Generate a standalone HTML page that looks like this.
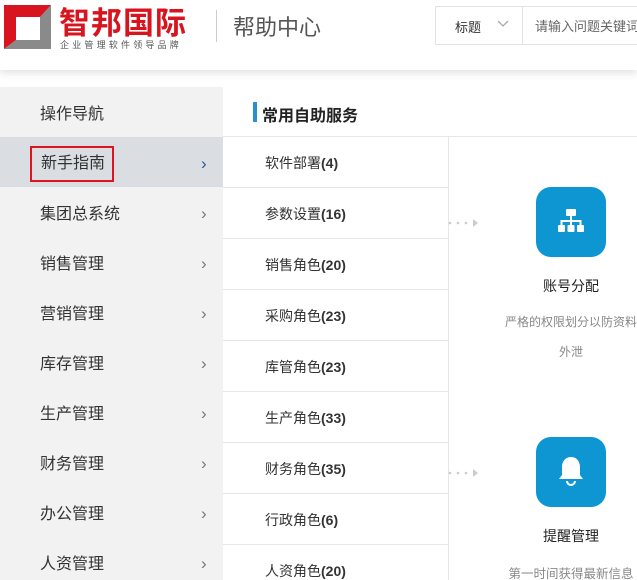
<!DOCTYPE html>
<html><head><meta charset="utf-8"><style>
*{margin:0;padding:0;box-sizing:border-box}
html,body{width:637px;height:580px;overflow:hidden}
body{background:#fff;font-family:"Liberation Sans","Noto Sans CJK SC",sans-serif;position:relative}
.a{position:absolute}
.hdr{left:0;top:0;width:637px;height:70px;background:#fff;box-shadow:0 3px 8px rgba(0,0,0,.12);z-index:2}
.nav{left:0;top:87px;width:223px;height:493px;background:#f2f2f2}
.ni{position:absolute;left:0;width:223px;height:50px;line-height:50px;padding-top:3px;padding-left:40px;font-size:16px;color:#333}
.ni .c{position:absolute;left:201px;top:2px;font-size:17px;color:#777}
.mi{position:absolute;left:223px;width:225px;height:51px;border-bottom:1px solid #e6e6e6;padding-left:42px;padding-top:1px;line-height:51px;font-size:14px;color:#333}
.mi b{font-weight:bold}
.ic{width:70px;height:70px;border-radius:15px;background:#0e96d3}
.t{font-size:14px;color:#222;text-align:center;width:200px}
.d{font-size:12px;color:#888;text-align:center;width:200px}
</style></head><body>
<div class="a hdr">
 <svg class="a" style="left:4px;top:5px" width="47" height="44" viewBox="0 0 47 44">
  <path d="M47 0V44H0L12 35H36V12Z" fill="#8a8a8a"/>
  <path d="M0 0H47L36 12H12V35L0 44Z" fill="#d8141e"/>
 </svg>
 <div class="a" style="left:59px;top:-2px;font-size:31px;font-weight:bold;color:#d8141e;letter-spacing:1px">智邦国际</div>
 <div class="a" style="left:60px;top:38px;font-size:9px;color:#555;letter-spacing:3.2px">企业管理软件领导品牌</div>
 <div class="a" style="left:216px;top:10px;width:1px;height:32px;background:#ccc"></div>
 <div class="a" style="left:233px;top:10px;font-size:22px;color:#555">帮助中心</div>
 <div class="a" style="left:435px;top:6px;width:210px;height:39px;border:1px solid #e3e3e3"></div>
 <div class="a" style="left:455px;top:17px;font-size:13px;color:#333">标题</div>
 <svg class="a" style="left:496px;top:19px" width="14" height="10"><path d="M2 2L7 7L12 2" stroke="#aaa" fill="none" stroke-width="1.3"/></svg>
 <div class="a" style="left:522px;top:7px;width:1px;height:37px;background:#e3e3e3"></div>
 <div class="a" style="left:535px;top:16px;font-size:13px;color:#666;white-space:nowrap">请输入问题关键词</div>
</div>
<div class="a nav">
 <div class="ni" style="top:0">操作导航</div>
 <div class="ni" style="top:50px;background:#dadde1"><span class="c" style="color:#2a5d9a">›</span></div>
 <div class="a" style="left:30px;top:59px;width:84px;height:36px;border:2px solid #e0141e;padding-left:9px;line-height:32px;font-size:16px;color:#333">新手指南</div>
 <div class="ni" style="top:100px">集团总系统<span class="c">›</span></div>
 <div class="ni" style="top:150px">销售管理<span class="c">›</span></div>
 <div class="ni" style="top:200px">营销管理<span class="c">›</span></div>
 <div class="ni" style="top:250px">库存管理<span class="c">›</span></div>
 <div class="ni" style="top:300px">生产管理<span class="c">›</span></div>
 <div class="ni" style="top:350px">财务管理<span class="c">›</span></div>
 <div class="ni" style="top:400px">办公管理<span class="c">›</span></div>
 <div class="ni" style="top:450px">人资管理<span class="c">›</span></div>
</div>
<div class="a" style="left:253px;top:102px;width:4px;height:20px;background:#2a8fd0"></div>
<div class="a" style="left:262px;top:102px;font-size:16px;font-weight:bold;color:#222">常用自助服务</div>
<div class="a" style="left:223px;top:136px;width:414px;height:1px;background:#e6e6e6"></div>
<div class="a" style="left:448px;top:137px;width:1px;height:443px;background:#e6e6e6"></div>
<div class="mi" style="top:137px">软件部署<b>(4)</b></div>
<div class="mi" style="top:188px">参数设置<b>(16)</b></div>
<div class="mi" style="top:239px">销售角色<b>(20)</b></div>
<div class="mi" style="top:290px">采购角色<b>(23)</b></div>
<div class="mi" style="top:341px">库管角色<b>(23)</b></div>
<div class="mi" style="top:392px">生产角色<b>(33)</b></div>
<div class="mi" style="top:443px">财务角色<b>(35)</b></div>
<div class="mi" style="top:494px">行政角色<b>(6)</b></div>
<div class="mi" style="top:545px">人资角色<b>(20)</b></div>
<svg class="a" style="left:448px;top:217px" width="36" height="12"><g fill="#ccc"><circle cx="2" cy="6" r="1.3"/><circle cx="10" cy="6" r="1.3"/><circle cx="18" cy="6" r="1.3"/><path d="M25 2L30 6L25 10Z"/></g></svg>
<svg class="a" style="left:448px;top:467px" width="36" height="12"><g fill="#ccc"><circle cx="2" cy="6" r="1.3"/><circle cx="10" cy="6" r="1.3"/><circle cx="18" cy="6" r="1.3"/><path d="M25 2L30 6L25 10Z"/></g></svg>
<div class="a ic" style="left:536px;top:187px"></div>
<svg class="a" style="left:536px;top:187px" width="70" height="70"><g fill="#fff"><rect x="30" y="22" width="10" height="7" rx="1"/><rect x="22" y="38" width="7" height="7" rx="1"/><rect x="31.5" y="38" width="7" height="7" rx="1"/><rect x="41" y="38" width="7" height="7" rx="1"/></g><path d="M35 29V38M25.5 38V34H44.5V38" stroke="#fff" stroke-width="2" fill="none"/></svg>
<div class="a t" style="left:471px;top:276px">账号分配</div>
<div class="a d" style="top:313px;width:240px;text-align:left;left:505px">严格的权限划分以防资料</div>
<div class="a d" style="left:471px;top:343px">外泄</div>
<div class="a ic" style="left:536px;top:437px"></div>
<svg class="a" style="left:536px;top:437px" width="70" height="70"><path d="M35 20C29 20 26 25 26 30V38L23 42H47L44 38V30C44 25 41 20 35 20Z" fill="#fff"/><path d="M31 44A4 4 0 0 0 39 44" stroke="#fff" stroke-width="2" fill="none"/></svg>
<div class="a t" style="left:471px;top:526px">提醒管理</div>
<div class="a d" style="left:471px;top:563px;font-size:12.5px">第一时间获得最新信息</div>
</body></html>
